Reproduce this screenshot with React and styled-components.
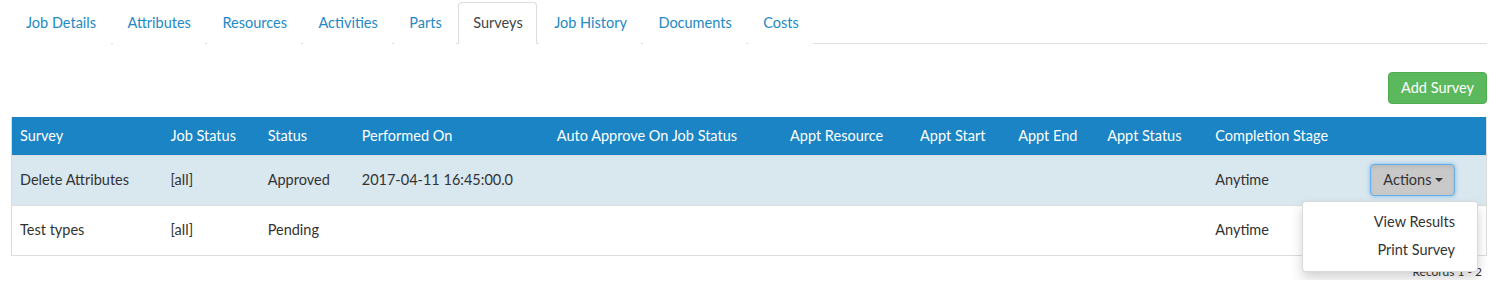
import React from "react";
import styled, { createGlobalStyle } from "styled-components";

const GlobalStyle = createGlobalStyle`
  html, body { margin: 0; padding: 0; background: #fff; }
  body { font-family: Lato, "Open Sans", "Liberation Sans", sans-serif; font-size: 14.5px; color: #333; }
  * { box-sizing: border-box; }
`;

const Page = styled.div`
  padding: 2px 11px 0;
`;

const TabBar = styled.ul`
  list-style: none;
  margin: 0;
  padding: 0;
  display: flex;
  border-bottom: 1px solid #ddd;
`;

const TabItem = styled.li`
  margin-bottom: -1px;
  margin-right: 2px;
`;

const TabLink = styled.a`
  display: block;
  padding: 10px 13.5px 10px 14px;
  line-height: 20px;
  border: 1px solid ${(p) => (p.$active ? "#ddd" : "transparent")};
  border-bottom-color: ${(p) => (p.$active ? "#fff" : "transparent")};
  border-radius: 4px 4px 0 0;
  background: #fff;
  color: ${(p) => (p.$active ? "#444" : "#2389c5")};
  text-decoration: none;
  cursor: pointer;
`;

const Toolbar = styled.div`
  display: flex;
  justify-content: flex-end;
  margin-top: 28px;
  margin-bottom: 13px;
`;

const AddButton = styled.button`
  font-family: inherit;
  font-size: 14.5px;
  line-height: 20px;
  padding: 5px 12px;
  color: #fff;
  background: #5cb85c;
  border: 1px solid #4cae4c;
  border-radius: 4px;
  cursor: pointer;
`;

const Table = styled.table`
  width: 100%;
  border-collapse: collapse;
  table-layout: fixed;
  border-left: 1px solid #ddd;
  border-right: 1px solid #ddd;
  border-bottom: 1px solid #ddd;
`;

const HeadCell = styled.th`
  width: ${(p) => p.$w}px;
  text-align: left;
  font-weight: 400;
  color: #fff;
  background: #1a84c4;
  padding: 9px 8px;
  line-height: 20px;
  white-space: nowrap;
`;

const Row = styled.tr`
  background: ${(p) => (p.$highlight ? "#d9e7ef" : "#fff")};
`;

const Cell = styled.td`
  padding: ${(p) => (p.$action ? "8px 8px 9px" : "14px 8px 15px")};
  line-height: 20px;
  border-top: 1px solid #ddd;
  vertical-align: middle;
  white-space: nowrap;
  color: #333;
`;

const DropWrap = styled.div`
  position: relative;
  display: flex;
`;

const ActionsButton = styled.button`
  font-family: inherit;
  font-size: 14.5px;
  line-height: 20px;
  height: 32px;
  padding: 5px 11px 5px 12px;
  color: #333;
  background: #c9c9c9;
  border: 1px solid #66afe9;
  border-radius: 4px;
  box-shadow: 0 0 4px rgba(102, 175, 233, 0.8), inset 0 2px 4px rgba(0,0,0,0.08);
  display: flex;
  align-items: center;
  gap: 4px;
  cursor: pointer;
`;

const Caret = styled.span`
  display: inline-block;
  width: 0;
  height: 0;
  border-top: 4px solid #333;
  border-left: 4px solid transparent;
  border-right: 4px solid transparent;
`;

const Menu = styled.ul`
  position: absolute;
  top: 37px;
  right: 0;
  width: 176px;
  margin: 0;
  padding: 6px 0 7px;
  list-style: none;
  background: #fff;
  border: 1px solid rgba(0, 0, 0, 0.15);
  border-radius: 4px;
  box-shadow: 0 6px 12px rgba(0, 0, 0, 0.175);
  z-index: 10;
`;

const MenuItem = styled.li`
  padding: 4px 22px;
  line-height: 20px;
  text-align: right;
  color: #333;
  white-space: nowrap;
`;

const Footer = styled.div`
  text-align: right;
  font-size: 12px;
  line-height: 16px;
  padding: 8px 5px 0 0;
  color: #333;
`;

const tabs = ["Job Details", "Attributes", "Resources", "Activities", "Parts", "Surveys", "Job History", "Documents", "Costs"];

const columns = [
  ["Survey", 151],
  ["Job Status", 97],
  ["Status", 94],
  ["Performed On", 195],
  ["Auto Approve On Job Status", 233],
  ["Appt Resource", 130],
  ["Appt Start", 98],
  ["Appt End", 89],
  ["Appt Status", 108],
  ["Completion Stage", 155],
  ["", 124],
];

const rows = [
  { survey: "Delete Attributes", job: "[all]", status: "Approved", performed: "2017-04-11 16:45:00.0", stage: "Anytime", open: true },
  { survey: "Test types", job: "[all]", status: "Pending", performed: "", stage: "Anytime", open: false },
];

export default function App() {
  return (
    <>
      <GlobalStyle />
      <Page>
        <TabBar>
          {tabs.map((t) => (
            <TabItem key={t}>
              <TabLink $active={t === "Surveys"}>{t}</TabLink>
            </TabItem>
          ))}
        </TabBar>
        <Toolbar>
          <AddButton>Add Survey</AddButton>
        </Toolbar>
        <Table>
          <thead>
            <tr>
              {columns.map(([c, w], i) => (
                <HeadCell key={i} $w={w}>{c}</HeadCell>
              ))}
            </tr>
          </thead>
          <tbody>
            {rows.map((r, i) => (
              <Row key={i} $highlight={r.open}>
                <Cell>{r.survey}</Cell>
                <Cell>{r.job}</Cell>
                <Cell>{r.status}</Cell>
                <Cell>{r.performed}</Cell>
                <Cell></Cell>
                <Cell></Cell>
                <Cell></Cell>
                <Cell></Cell>
                <Cell></Cell>
                <Cell>{r.stage}</Cell>
                <Cell $action={r.open}>
                  {r.open && (
                    <DropWrap>
                      <ActionsButton>
                        Actions <Caret />
                      </ActionsButton>
                      <Menu>
                        <MenuItem>View Results</MenuItem>
                        <MenuItem>Print Survey</MenuItem>
                      </Menu>
                    </DropWrap>
                  )}
                </Cell>
              </Row>
            ))}
          </tbody>
        </Table>
        <Footer>Records 1 - 2</Footer>
      </Page>
    </>
  );
}
